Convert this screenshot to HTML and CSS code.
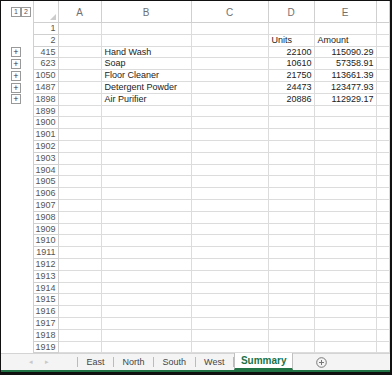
FILE: index.html
```html
<!DOCTYPE html>
<html lang="en">

<head>
    <title>Summary</title>
    <meta charset="utf-8">
    <link rel="stylesheet" href="styles.css">
</head>

<body>
    <div class="frame">
        <table class="sheet">
            <colgroup>
                <col class="c-outline">
                <col class="c-num">
                <col class="c-a">
                <col class="c-b">
                <col class="c-c">
                <col class="c-d">
                <col class="c-e">
                <col>
            </colgroup>
            <tr class="head">
                <td class="outline"><span class="level">1</span><span class="level">2</span></td>
                <th class="corner"><span class="tri"></span></th>
                <th>A</th>
                <th>B</th>
                <th>C</th>
                <th>D</th>
                <th>E</th>
                <th></th>
            </tr>
            <tr><td class="outline"></td><th>1</th><td></td><td></td><td></td><td></td><td></td><td></td></tr>
            <tr><td class="outline"></td><th>2</th><td></td><td></td><td></td><td>Units</td><td>Amount</td><td></td></tr>
            <tr><td class="outline"><span class="plus">+</span></td><th>415</th><td></td><td>Hand Wash</td><td></td><td class="num">22100</td><td class="num">115090.29</td><td></td></tr>
            <tr><td class="outline"><span class="plus">+</span></td><th>623</th><td></td><td>Soap</td><td></td><td class="num">10610</td><td class="num">57358.91</td><td></td></tr>
            <tr><td class="outline"><span class="plus">+</span></td><th>1050</th><td></td><td>Floor Cleaner</td><td></td><td class="num">21750</td><td class="num">113661.39</td><td></td></tr>
            <tr><td class="outline"><span class="plus">+</span></td><th>1487</th><td></td><td>Detergent Powder</td><td></td><td class="num">24473</td><td class="num">123477.93</td><td></td></tr>
            <tr><td class="outline"><span class="plus">+</span></td><th>1898</th><td></td><td>Air Purifier</td><td></td><td class="num">20886</td><td class="num">112929.17</td><td></td></tr>
            <tr><td class="outline"></td><th>1899</th><td></td><td></td><td></td><td></td><td></td><td></td></tr>
            <tr><td class="outline"></td><th>1900</th><td></td><td></td><td></td><td></td><td></td><td></td></tr>
            <tr><td class="outline"></td><th>1901</th><td></td><td></td><td></td><td></td><td></td><td></td></tr>
            <tr><td class="outline"></td><th>1902</th><td></td><td></td><td></td><td></td><td></td><td></td></tr>
            <tr><td class="outline"></td><th>1903</th><td></td><td></td><td></td><td></td><td></td><td></td></tr>
            <tr><td class="outline"></td><th>1904</th><td></td><td></td><td></td><td></td><td></td><td></td></tr>
            <tr><td class="outline"></td><th>1905</th><td></td><td></td><td></td><td></td><td></td><td></td></tr>
            <tr><td class="outline"></td><th>1906</th><td></td><td></td><td></td><td></td><td></td><td></td></tr>
            <tr><td class="outline"></td><th>1907</th><td></td><td></td><td></td><td></td><td></td><td></td></tr>
            <tr><td class="outline"></td><th>1908</th><td></td><td></td><td></td><td></td><td></td><td></td></tr>
            <tr><td class="outline"></td><th>1909</th><td></td><td></td><td></td><td></td><td></td><td></td></tr>
            <tr><td class="outline"></td><th>1910</th><td></td><td></td><td></td><td></td><td></td><td></td></tr>
            <tr><td class="outline"></td><th>1911</th><td></td><td></td><td></td><td></td><td></td><td></td></tr>
            <tr><td class="outline"></td><th>1912</th><td></td><td></td><td></td><td></td><td></td><td></td></tr>
            <tr><td class="outline"></td><th>1913</th><td></td><td></td><td></td><td></td><td></td><td></td></tr>
            <tr><td class="outline"></td><th>1914</th><td></td><td></td><td></td><td></td><td></td><td></td></tr>
            <tr><td class="outline"></td><th>1915</th><td></td><td></td><td></td><td></td><td></td><td></td></tr>
            <tr><td class="outline"></td><th>1916</th><td></td><td></td><td></td><td></td><td></td><td></td></tr>
            <tr><td class="outline"></td><th>1917</th><td></td><td></td><td></td><td></td><td></td><td></td></tr>
            <tr><td class="outline"></td><th>1918</th><td></td><td></td><td></td><td></td><td></td><td></td></tr>
            <tr><td class="outline"></td><th>1919</th><td></td><td></td><td></td><td></td><td></td><td></td></tr>
        </table>

        <div class="tabs">
            <div class="arrows"><span>&#9666;</span><span>&#9656;</span></div>
            <div class="tab">East</div>
            <div class="tab">North</div>
            <div class="tab">South</div>
            <div class="tab">West</div>
            <div class="tab active">Summary</div>
            <div class="add">
                <svg width="11" height="11" viewBox="0 0 11 11">
                    <circle cx="5.5" cy="5.5" r="4.8" fill="none" stroke="#777" stroke-width="1"/>
                    <path d="M5.5 3v5M3 5.5h5" stroke="#777" stroke-width="1"/>
                </svg>
            </div>
        </div>
    </div>
</body>

</html>
```

FILE: styles.css
```css
html,
body {
    background-color: white;
    margin: 0;
    padding: 0;
}

.frame {
    width: 392px;
    height: 375px;
    box-sizing: border-box;
    border: 1px solid #111;
    border-right-width: 2px;
    border-bottom-width: 3px;
    display: flex;
    flex-direction: column;
    font-family: "Liberation Sans", Arial, sans-serif;
    font-size: 9px;
    color: #222;
    overflow: hidden;
}

.sheet {
    flex: none;
    border-collapse: collapse;
    table-layout: fixed;
    width: 389px;
}

.c-outline {
    width: 32px;
}

.c-num {
    width: 25px;
}

.c-a {
    width: 43px;
}

.c-b {
    width: 90px;
}

.c-c {
    width: 77px;
}

.c-d {
    width: 46px;
}

.c-e {
    width: 62px;
}

td,
th {
    padding: 0 3px;
    height: 10.8px;
    line-height: 10px;
    border: 1px solid #dcdcdc;
    white-space: nowrap;
    overflow: hidden;
    text-align: left;
    font-weight: normal;
    vertical-align: top;
}

th {
    color: #555;
    text-align: right;
    padding: 0 2px;
    border-color: #d0d0d0;
}

.head th,
.head td {
    height: 18px;
    vertical-align: middle;
}

.head th {
    text-align: center;
    color: #707070;
    font-size: 10px;
    border-top: none;
    padding-top: 3px;
}

.head .corner {
    position: relative;
}

.tri {
    position: absolute;
    right: 2px;
    bottom: 2px;
    border-left: 6px solid transparent;
    border-bottom: 6px solid #ccc;
}

.num {
    text-align: right;
    padding-right: 2px;
}

td.outline {
    border: none;
    padding: 0 0 0 10px;
    vertical-align: middle;
}

.level,
.plus {
    display: inline-block;
    width: 8px;
    height: 8px;
    border: 1px solid #999;
    line-height: 8px;
    text-align: center;
    font-size: 7px;
    color: #555;
    vertical-align: middle;
}

.plus {
    font-size: 9px;
    color: #333;
}

.tabs {
    flex: 1;
    display: flex;
    align-items: stretch;
    background-color: #f4f4f4;
    border-top: 1px solid #d4d4d4;
    border-bottom: 2px solid #217346;
    color: #444;
}

.arrows {
    width: 76px;
    display: flex;
    justify-content: center;
    gap: 12px;
    align-items: center;
    color: #c8c8c8;
    font-size: 7px;
    border-right: 1px solid #bbb;
    margin: 3px 0;
}

.tab {
    padding: 0 8.5px;
    display: flex;
    align-items: center;
    border-right: 1px solid #bbb;
    margin: 3px 0;
}

.tab.active {
    margin: -1px 0 0 0;
    background-color: white;
    color: #217346;
    font-weight: bold;
    font-size: 10px;
    border: 1px solid #c0c0c0;
    border-top: none;
    border-bottom: 2px solid #217346;
    padding: 0 6px;
}

.add {
    width: 56px;
    display: flex;
    align-items: center;
    justify-content: center;
}
```
